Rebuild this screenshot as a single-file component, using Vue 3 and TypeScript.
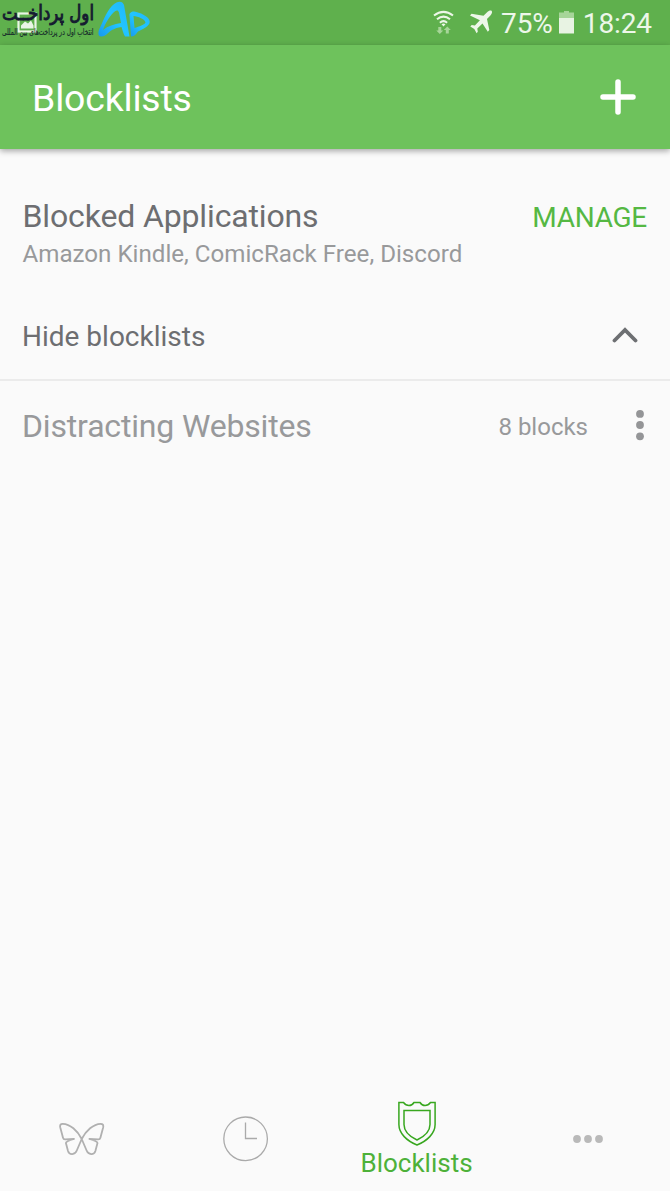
<script setup lang="ts">
interface Tab {
  id: string
  label?: string
}
const tabs: Tab[] = [
  { id: 'butterfly' },
  { id: 'clock' },
  { id: 'shield', label: 'Blocklists' },
  { id: 'more' },
]
const applications: string[] = ['Amazon Kindle', 'ComicRack Free', 'Discord']
</script>

<template>
  <div class="screen">
    <div class="status">
      <svg class="brand" width="154" height="42" viewBox="0 0 154 42">
        <rect x="18.500" y="13.500" width="17" height="18" fill="none" stroke="#e9f6e5" stroke-width="2.200" />
        <path d="M21 28.500v-3l4-4 3 2 3-3 2.500 5v3z" fill="#e9f6e5" />
        <text x="94" y="19.800" direction="rtl" class="brand-name" textLength="92" lengthAdjust="spacingAndGlyphs">اول پرداخــت</text>
        <text x="93.500" y="35" direction="rtl" class="brand-tag" textLength="91.500" lengthAdjust="spacingAndGlyphs">انتخاب اول در پرداخت‌های بین المللی</text>
        <defs>
          <linearGradient id="blue" x1="0" y1="1" x2="1" y2="0">
            <stop offset="0" stop-color="#1798ed" />
            <stop offset=".5" stop-color="#22c5ff" />
            <stop offset="1" stop-color="#21b6fb" />
          </linearGradient>
        </defs>
        <path fill="url(#blue)" fill-rule="evenodd" d="M99.500 36C97.500 34 98.500 30 101 25.500C105 16 110 5.500 116.500 2.500C120 .8 123 2 124 5L129.500 36.500H125C123.500 34 122.500 30 121.500 27C114 28 110 31 106.500 34.500Q103 37.500 99.500 36ZM103 30C108 26 114 24 121 23L119 12.500C118 9.500 116 10 113.500 12.500C109 17 105 24 103 30Z" />
        <path fill="url(#blue)" fill-rule="evenodd" d="M131 36.500L129.500 16C129 13 131 11.500 134 11.500C140 12.500 148 16 149.500 20.500C151 25 145 28 138 31.500C136 34.500 134 36.500 131 36.500ZM134.500 28C139 26.500 145 24.500 145.500 22.500C145 19 138 16.500 133.500 16Z" />
      </svg>
      <div class="indicators">
        <svg class="wifi" width="22" height="26" viewBox="0 0 22 26">
          <g fill="none" stroke="#edf7e9" stroke-width="2.100">
            <path d="M1 5.500q9.500-7.400 19 0M4 9.300q6.500-5.300 13 0M6.900 12.700q3.600-3 7.200 0" />
          </g>
          <path d="M8.500 14.300q2-1.500 4 0l-2 2.200z" fill="#edf7e9" />
          <path d="M5.300 17h3v3.500h2L6.800 24 3.300 20.500h2zM12.800 23.500V20h-2l3.500-3.500 3.500 3.500h-2v3.500z" fill="#a7d599" />
        </svg>
        <svg class="plane" width="24" height="24" viewBox="0 0 24 24">
          <path fill="#edf7e9" d="M22.700 1c.9 1 .1 3-1.300 4.400L18 9l2.300 11-1.500 1.700-5.300-8.200-5.200 5 .5 3.200-1.200 1.600-2.300-4.200-4-2.500 1.400-1.500 3.200.4 5-5.200L1 5.500l1.500-1.700L14.500 5.700 18.100 2.300c1.600-1.500 3.700-2.200 4.600-1.300z" />
        </svg>
        <span class="percent">75%</span>
        <svg class="battery" width="15" height="23" viewBox="0 0 15 23">
          <path d="M5 0h5v1.500h5V7H0V1.500h5z" fill="#a7d599" />
          <path d="M0 7h15v15.500H0z" fill="#e8f3e3" />
        </svg>
        <span class="time">18:24</span>
      </div>
    </div>

    <header class="header">
      <h1>Blocklists</h1>
      <svg class="plus" width="36" height="36" viewBox="0 0 36 36">
        <path d="M18 3v30M3 18h30" fill="none" stroke="#fff" stroke-width="5.500" stroke-linecap="round" />
      </svg>
    </header>

    <main class="content">
      <section class="blocked">
        <div>
          <h2>Blocked Applications</h2>
          <p>{{ applications.join(', ') }}</p>
        </div>
        <span class="manage">MANAGE</span>
      </section>
      <div class="toggle">
        <span>Hide blocklists</span>
        <svg width="26" height="18" viewBox="0 0 26 18">
          <path d="M2.500 13.500L13 3l10.500 10.500" fill="none" stroke="#6d6f72" stroke-width="3.800" stroke-linecap="round" />
        </svg>
      </div>
      <div class="row">
        <span class="row-name">Distracting Websites</span>
        <span class="count">8 blocks</span>
        <svg width="8" height="32" viewBox="0 0 8 32" fill="#949597">
          <circle cx="4" cy="3.900" r="3.900" />
          <circle cx="4" cy="15" r="3.900" />
          <circle cx="4" cy="26.300" r="3.900" />
        </svg>
      </div>
    </main>

    <nav class="tabs">
      <div v-for="tab in tabs" :key="tab.id" class="tab" :class="tab.id">
        <svg v-if="tab.id === 'butterfly'" width="46" height="34" viewBox="0 0 46 34">
          <path d="M22.700 17C18.500 8.500 11 2 3.800 1.800Q.6 1.700 1.200 5.200L4 15.800Q4.400 17.400 6 17.400L15 17C11 18.100 7 19 6.900 21L9 29C10.500 33.500 16 33 17.800 28.500L22.700 17C27 8.500 34.500 2 41.600 1.800Q44.800 1.700 44.200 5.200L41.400 15.800Q41 17.400 39.400 17.400L30.400 17C34.400 18.100 38.400 19 38.500 21L36.400 29C34.900 33.500 29.400 33 27.600 28.500Z" fill="none" stroke="#b0b0b0" stroke-width="1.800" stroke-linejoin="round" />
        </svg>
        <svg v-else-if="tab.id === 'clock'" width="46" height="46" viewBox="0 0 46 46">
          <g fill="none" stroke="#aaa" stroke-width="1.300">
            <circle cx="22.600" cy="22.800" r="21.800" />
            <path d="M22.500 6.500V22.500h11.500" />
          </g>
        </svg>
        <svg v-else-if="tab.id === 'shield'" width="38" height="46" viewBox="0 0 38 46">
          <g fill="none" stroke="#38a71f" stroke-width="1.500">
            <path d="M.9 2.500H5.500C8.500 6.500 13.500 6.500 16 2.500H22C24.500 6.500 29.500 6.500 32.500 2.500H37.100V24.500C37.100 33.500 29 41 19 45C9 41 .9 33.500 .9 24.500Z" />
            <path d="M6 10.500H32V24.500C32 31.500 26.500 36.500 19 40C11.500 36.500 6 31.500 6 24.500Z" />
          </g>
        </svg>
        <svg v-else width="30" height="8" viewBox="0 0 30 8" fill="#b9b9b9">
          <circle cx="4" cy="4" r="3.900" />
          <circle cx="15" cy="4" r="3.900" />
          <circle cx="26" cy="4" r="3.900" />
        </svg>
        <span v-if="tab.label">{{ tab.label }}</span>
      </div>
    </nav>
  </div>
</template>

<style>
body {
  margin: 0;
  background: #fafafa;
}
</style>

<style scoped>
.screen {
  width: 670px;
  height: 1191px;
  display: flex;
  flex-direction: column;
  overflow: hidden;
  background: #fafafa;
  font-family: Roboto, sans-serif;
}
h1, h2, p {
  margin: 0;
  font-weight: 400;
}
svg {
  flex: none;
  display: block;
}
span, h1, h2, p {
  white-space: nowrap;
}
.status {
  height: 45px;
  display: flex;
  justify-content: space-between;
  background: #5fb04d;
  flex: none;
}
.brand-name {
  font: 20.500px "DejaVu Sans", sans-serif;
  fill: #151b30;
  stroke: #151b30;
  stroke-width: 1px;
}
.brand-tag {
  font: 9px "DejaVu Sans", sans-serif;
  fill: #172d2b;
  stroke: #172d2b;
  stroke-width: .2px;
}
.indicators {
  display: flex;
  align-items: center;
  color: #edf7e9;
  font-size: 28px;
  line-height: 44px;
  padding: 2px 18px 0 0;
}
.percent,
.time {
  letter-spacing: -.1px;
}
.wifi {
  margin: -1px 14px 0 0;
}
.plane {
  margin: -3px 8px 0 0;
}
.battery {
  margin: -2px 9px 0 6px;
}
.header {
  height: 104px;
  box-sizing: border-box;
  padding: 0 34px 0 32px;
  display: flex;
  flex: none;
  align-items: center;
  justify-content: space-between;
  background: #6ec25c;
  box-shadow: 0 2px 6px rgba(0, 0, 0, .35);
  color: #fff;
}
h1 {
  font-size: 37.400px;
  line-height: 44px;
  letter-spacing: -.15px;
  padding-top: 2px;
}
.content {
  flex: 1;
}
.blocked {
  height: 143px;
  box-sizing: border-box;
  padding: 48px 23px 0 22.500px;
  display: flex;
  justify-content: space-between;
}
h2 {
  color: #6d6e71;
  font-size: 32px;
  line-height: 38px;
  letter-spacing: -.14px;
}
p {
  color: #98999b;
  font-size: 24.150px;
  line-height: 38px;
}
.manage {
  color: #55b843;
  font-size: 28px;
  line-height: 41px;
  letter-spacing: -.25px;
}
.toggle {
  height: 86px;
  padding: 1px 32px 0 22px;
  display: flex;
  align-items: center;
  justify-content: space-between;
  border-bottom: 2px solid #ebebeb;
  color: #6d6e71;
  font-size: 28px;
}
.toggle span {
  padding-top: 1px;
}
.row {
  height: 90px;
  padding: 0 26px 0 22px;
  display: flex;
  align-items: center;
  color: #98999b;
}
.row-name {
  font-size: 32px;
  letter-spacing: -.17px;
}
.count {
  margin: 0 48px 0 auto;
  padding-top: 1px;
  font-size: 24px;
}
.tabs {
  height: 106px;
  display: flex;
  flex: none;
}
.tab {
  width: 164px;
  box-sizing: border-box;
  padding-top: 2px;
  display: flex;
  flex: none;
  flex-direction: column;
  align-items: center;
  justify-content: center;
}
.tab.shield {
  width: 178px;
  justify-content: flex-start;
  padding: 15px 1px 0 0;
  color: #4db139;
  font-size: 26px;
  line-height: 34px;
}
</style>
